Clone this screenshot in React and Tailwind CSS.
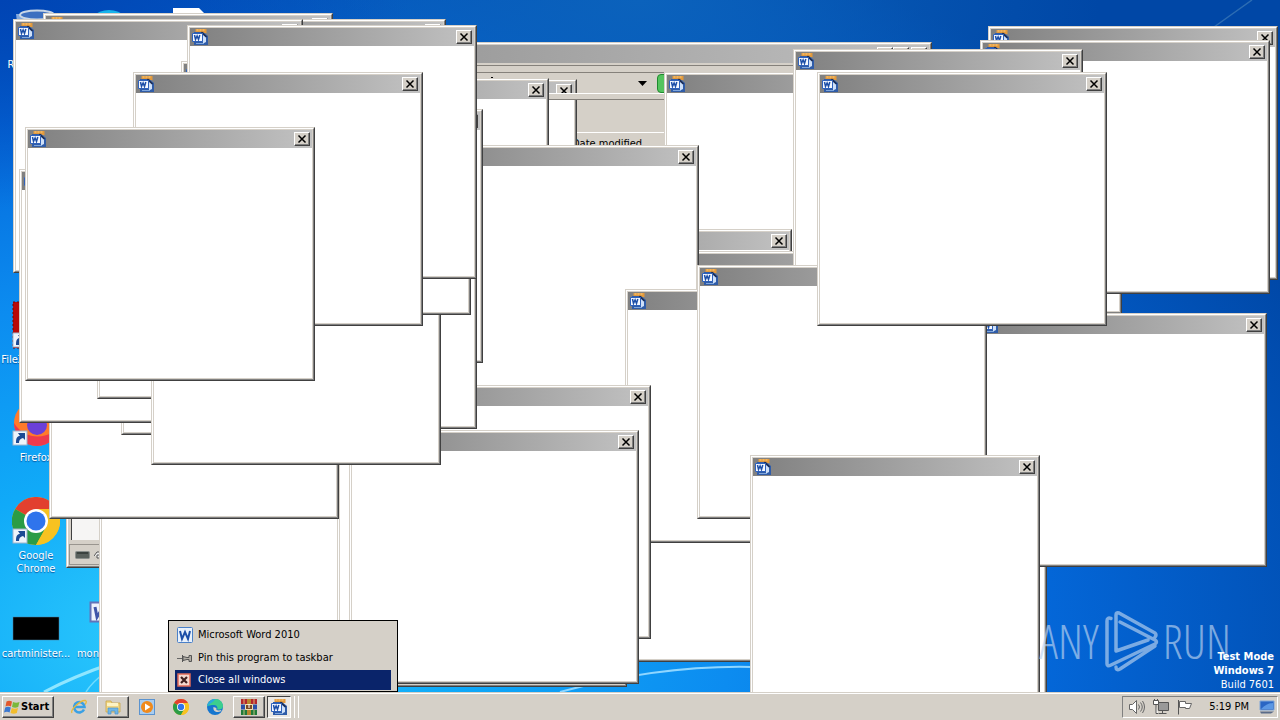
import React from "react";

const RAISED =
  "bg-[#d5d0c8] border border-t-white border-l-white border-r-[#404040] border-b-[#404040] shadow-[inset_-1px_-1px_0_#808080]";

function WordDocIcon() {
  return (
    <svg className="size-4 shrink-0" viewBox="0 0 16 16" aria-hidden="true">
      <path d="M3.500 0h11v4h-11z" fill="#e39a3c" />
      <path d="M4.500 1h9" stroke="#f8cf86" strokeDasharray="2 1" />
      <path d="M2 3h9l5 4v9H2z" fill="#2f5ca8" />
      <path d="M11 6l3 2.500v4.500l-3 1.500z" fill="#cfe0f8" />
      <path d="M9.500 3l5 5" stroke="#1b2748" strokeWidth="1.300" />
      <path d="M0.500 4.500h10v8h-10z" fill="#f4f8ff" stroke="#2f62bc" />
      <path d="M2.500 6l1 4.500 1.600-3.500 1.400 3.500L7.800 6" fill="none" stroke="#1d4fa8" strokeWidth="1.500" />
      <path d="M4 14.500h8" stroke="#7fa6dc" />
    </svg>
  );
}

function CaptionButton({ label, children }) {
  return (
    <button type="button" aria-label={label} className={"h-[14px] w-4 shrink-0 " + RAISED}>
      <svg className="block h-3 w-[14px]" viewBox="0 0 14 12" fill="none" stroke="#000" strokeWidth="1.500" aria-hidden="true">
        {children}
      </svg>
    </button>
  );
}

function CloseButton() {
  return (
    <CaptionButton label="Close">
      <path d="M3.500 2.500l7 7M10.500 2.500l-7 7" />
    </CaptionButton>
  );
}

function Frame({ x, y, w = 290, h = 254, children }) {
  return (
    <section
      className="absolute flex border border-t-[#d5d0c8] border-l-[#d5d0c8] border-r-[#404040] border-b-[#404040]"
      style={{ left: x, top: y, width: w, height: h }}
    >
      <div className="flex min-w-0 flex-1 flex-col border border-t-white border-l-white border-r-[#808080] border-b-[#808080] bg-[#d5d0c8] p-px">
        {children}
      </div>
    </section>
  );
}

function WordWindow({ x, y }) {
  return (
    <Frame x={x} y={y}>
      <header className="flex h-[18px] shrink-0 items-center justify-between bg-linear-to-r from-[#808080] to-[#c2c2c2] px-[2px]">
        <WordDocIcon />
        <CloseButton />
      </header>
      <div className="flex-1 bg-white" />
    </Frame>
  );
}

function ExplorerWindow() {
  return (
    <Frame x={66} y={42} w={866} h={526}>
      <header className="flex h-[18px] shrink-0 items-center justify-end bg-linear-to-r from-[#808080] to-[#c0c0c0] px-[2px]">
        <CaptionButton label="Minimize">
          <path d="M3 9h6" />
        </CaptionButton>
        <CaptionButton label="Maximize">
          <path d="M3 2.500h8v7H3z" />
        </CaptionButton>
        <span className="w-[2px]" />
        <CloseButton />
      </header>
      <div className="mt-[2px] h-2 shrink-0 border-b border-t border-b-[#85817b] border-t-[#85817b]" />
      <div className="relative flex h-[22px] shrink-0 items-center">
        <span className="absolute left-[422px] top-1 h-px w-[2px] bg-black" />
        <svg className="absolute left-[569px] top-2 h-[5px] w-[9px]" viewBox="0 0 9 5" aria-hidden="true">
          <path d="M0 0h9L4.500 5z" fill="#000" />
        </svg>
        <span className="absolute left-[588px] top-px h-[19px] w-5 rounded-sm border border-[#1f8a2e] bg-[#54c45e]" />
      </div>
      <div className="h-[37px] shrink-0" />
      <div className="flex h-[22px] shrink-0 items-center border-t border-white pl-[503px] text-[11px] leading-5 text-black">
        Date modified
      </div>
      <div className="ml-[2px] flex-1 border-l border-[#404040] bg-[#f6f5f4]" />
      <footer className="mt-1 flex h-[21px] shrink-0 items-center gap-1 border border-[#99958f] px-[5px]">
        <svg className="h-2 w-[15px]" viewBox="0 0 15 8" aria-hidden="true">
          <rect x="0.5" y="0.5" width="14" height="7" rx="1" fill="#59605c" stroke="#8a8f8c" />
          <path d="M2 2h11" stroke="#1f2422" />
        </svg>
        <svg className="h-2 w-[15px]" viewBox="0 0 15 8" aria-hidden="true">
          <path d="M0 5l3-4h9v3M3 4h8v3H3z" fill="#f0f0f0" stroke="#555" />
        </svg>
      </footer>
    </Frame>
  );
}

/* Stacking order, bottom to top. */
const BACK_WINDOWS = [[287, 79]];
const WINDOWS = [
  [259, 78], [832, 60], [757, 445], [988, 26], [980, 40], [977, 313],
  [664, 72], [502, 229], [650, 251], [409, 145], [500, 408], [625, 289],
  [793, 49], [697, 265], [817, 72], [99, 450], [337, 433], [361, 385],
  [349, 430], [750, 455], [49, 265], [43, 13], [156, 19], [13, 19],
  [193, 109], [187, 175], [121, 181], [19, 169], [97, 145], [151, 211],
  [181, 61], [187, 25], [133, 72], [25, 127],
];

function ShortcutArrow() {
  return (
    <g>
      <rect x="1" y="32" width="14" height="14" fill="#eef4fb" stroke="#9fb4cc" />
      <path d="M4 44c0-5 1-7 4-7l-2-3h7v7l-2-2c-3 1-4 2-4 5z" fill="#1c4a94" />
    </g>
  );
}

function ChromeArt() {
  return (
    <g>
      <circle cx="24" cy="24" r="24" fill="#f7c221" />
      <path d="M24 24L3.200 12A24 24 0 0 1 44.800 12z" fill="#e2402f" />
      <path d="M24 24L3.200 12A24 24 0 0 0 24 48l10-18z" fill="#2b9c46" />
      <path d="M24 12h20.800A24 24 0 0 1 24 48l10.400-18z" fill="#f7c221" />
      <circle cx="24" cy="24" r="12" fill="#fff" />
      <circle cx="24" cy="24" r="9.500" fill="#2f74ec" />
    </g>
  );
}

const ART = {
  recycle: (
    <g>
      <path d="M4 8l5 38h30l5-38z" fill="#b9d3ee" opacity=".7" />
      <ellipse cx="25" cy="9" rx="17" ry="4.500" fill="#3c6fc0" stroke="#c8d6e6" strokeWidth="2" />
    </g>
  ),
  app: <circle cx="24" cy="28" r="24" fill="#18b4ea" />,
  doc: <path d="M8 3h26l6 6v39H8z" fill="#fff" />,
  blank: <g />,
  filezilla: (
    <g>
      <rect x="1" y="1" width="46" height="46" fill="#b80808" stroke="#6e0505" strokeDasharray="2 2" />
      <ShortcutArrow />
    </g>
  ),
  firefox: (
    <g>
      <circle cx="25" cy="24" r="23" fill="#ff7a2a" />
      <path d="M2 24a23 23 0 0 0 46 0c-6 16-34 20-46 0z" fill="#ee3a4c" />
      <circle cx="25" cy="26" r="10" fill="#6a3fd8" />
      <ShortcutArrow />
    </g>
  ),
  chrome: (
    <g>
      <ChromeArt />
      <ShortcutArrow />
    </g>
  ),
  image: <rect x="1" y="22" width="46" height="23" fill="#000" stroke="#4b7d9c" strokeWidth=".5" />,
  word: (
    <g>
      <rect x="5.500" y="7.500" width="34" height="19" fill="#eef3fc" stroke="#6373b8" strokeWidth="2" />
      <path d="M10 12l2 10 5-8 4 8 4-10" fill="none" stroke="#3f55a8" strokeWidth="3" />
    </g>
  ),
};

const ICONS = [
  { x: 0, y: 6, art: "recycle", label: "Recycle Bin" },
  { x: 73, y: 6, art: "app", label: "" },
  { x: 153, y: 5, art: "doc", label: "" },
  { x: 0, y: 117, art: "blank", label: "Programs" },
  { x: 0, y: 301, art: "filezilla", label: "FileZilla Client" },
  { x: 0, y: 399, art: "firefox", label: "Firefox" },
  { x: 0, y: 497, art: "chrome", label: "Google Chrome" },
  { x: 0, y: 595, art: "image", label: "cartminister..." },
  { x: 73, y: 595, art: "word", label: "monthlywo..." },
];

function DesktopIcon({ x, y, art, label }) {
  return (
    <div className="absolute flex w-[72px] flex-col items-center gap-1" style={{ left: x, top: y }}>
      <svg className="size-12" viewBox="0 0 48 48" aria-hidden="true">{ART[art]}</svg>
      <span className="w-full text-center text-[11px] leading-[13px] text-white [text-shadow:0_1px_1px_#0355a0]">{label}</span>
    </div>
  );
}

function Wallpaper() {
  return (
    <div className="absolute inset-0 bg-[radial-gradient(ellipse_98%_112%_at_14%_92%,#2fcdfd_0%,#10aaf8_22%,#0c8cf0_44%,#0468da_68%,#0047a6_100%)]">
      <div className="absolute inset-0 bg-[radial-gradient(ellipse_36%_34%_at_50%_0%,#0b62bc_0%,transparent_100%)]" />
      <div className="absolute inset-0 bg-[radial-gradient(ellipse_32%_30%_at_0%_0%,#0044b4_0%,transparent_100%)]" />
      <svg className="absolute inset-0 size-full" viewBox="0 0 1280 692" preserveAspectRatio="none" aria-hidden="true">
        <path d="M44 692Q75 676 110 664" fill="none" stroke="#8fe6ff" strokeWidth="3" />
        <path d="M86 692Q92 682 106 672" fill="none" stroke="#6fdcff" strokeWidth="1.500" />
        <path d="M560 692Q660 665 752 667" fill="none" stroke="#8fd6ff" strokeWidth="2" />
        <path d="M1214 27L1252 0" stroke="#4a86bd" strokeWidth="1.500" opacity=".6" />
      </svg>
    </div>
  );
}

function Watermark() {
  return (
    <div className="pointer-events-none absolute bottom-5 right-[49px] flex items-center gap-1 text-[47px] font-light leading-none text-[#bcd4f0] opacity-65 [font-family:'Open_Sans_Condensed_Light','Open_Sans_Condensed','Liberation_Sans_Narrow','Liberation_Sans',sans-serif]">
      <span>ANY</span>
      <svg className="h-[62px] w-14" viewBox="0 0 56 62" aria-hidden="true">
        <path
          d="M8 8.500Q4 7 4 11v43q0 3 4 1l44-21q3-2 0-4L17 12M13 41V5q0-3 3-2l36 20q2 2 0 4M13 41l32-11M13 57q0 4 4 2l35-23"
          fill="none"
          stroke="currentColor"
          strokeWidth="3.500"
          strokeLinejoin="round"
          strokeLinecap="round"
        />
      </svg>
      <span>RUN</span>
    </div>
  );
}

const MENU_ROW = "flex w-full items-center gap-[5px] px-[2px] text-left text-[11px]";

function JumpMenu() {
  return (
    <div role="menu" className="absolute bottom-0 left-[168px] flex w-[230px] flex-col gap-px border border-black bg-[#d5d0c8] px-[6px] pb-px pt-[3px] text-black">
      <button type="button" role="menuitem" className={"h-[22px] " + MENU_ROW}>
        <svg className="size-4" viewBox="0 0 16 16" aria-hidden="true">
          <rect x="0.500" y="0.500" width="15" height="15" rx="1" fill="#e8f1fc" stroke="#4a80c8" />
          <path d="M3 4l2 8 3-7 3 7 2-8" fill="none" stroke="#1d4fa8" strokeWidth="2" />
        </svg>
        Microsoft Word 2010
      </button>
      <button type="button" role="menuitem" className={"h-[22px] " + MENU_ROW}>
        <svg className="size-4" viewBox="0 0 16 16" aria-hidden="true">
          <path d="M0 8.500h5" stroke="#666" />
          <path d="M5.500 5v7M6 6.500l4 1h2v-2h2.500v6H12v-2h-2l-4 1z" fill="#b0aca4" stroke="#555" />
        </svg>
        Pin this program to taskbar
      </button>
      <button type="button" role="menuitem" className={"h-5 bg-[#0a246a] text-white " + MENU_ROW}>
        <svg className="size-4" viewBox="0 0 16 16" aria-hidden="true">
          <rect x="1" y="2" width="12" height="12" fill="#f6d8d0" stroke="#e06a58" strokeWidth="1.500" />
          <path d="M4 5l6 6M10 5l-6 6" stroke="#402020" strokeWidth="2.200" />
        </svg>
        Close all windows
      </button>
    </div>
  );
}

function IeIcon() {
  return (
    <svg className="size-4" viewBox="0 0 16 16" aria-hidden="true">
      <path d="M13 10.500A5.200 5.200 0 1 1 13.500 8H4.500" fill="none" stroke="#3aa0e4" strokeWidth="2.600" />
      <path d="M1 14C-1 11 9 1 14.500 1.500c1.500.5.500 3-.5 4" fill="none" stroke="#e8b93a" strokeWidth="1.300" />
    </svg>
  );
}

function FolderIcon() {
  return (
    <svg className="size-4" viewBox="0 0 16 16" aria-hidden="true">
      <path d="M1 2h5l1 2h8v9H1z" fill="#f0d684" stroke="#c9a544" strokeWidth=".8" />
      <path d="M2 4h11v3H2z" fill="#fdf3c4" />
      <path d="M3 15V9h10v6h-3v-3H6v3z" fill="#6fb6e6" stroke="#4a93cc" strokeWidth=".7" />
    </svg>
  );
}

function MediaIcon() {
  return (
    <svg className="size-4" viewBox="0 0 16 16" aria-hidden="true">
      <rect x="0.500" y="0.500" width="15" height="15" fill="#a9cdf0" stroke="#5b93cf" />
      <circle cx="8" cy="8" r="6" fill="#f08a1c" />
      <path d="M6 4.500l5.500 3.500L6 11.500z" fill="#fff" />
    </svg>
  );
}

function ChromeIcon() {
  return (
    <svg className="size-4" viewBox="0 0 48 48" aria-hidden="true">
      <ChromeArt />
    </svg>
  );
}

function EdgeIcon() {
  return (
    <svg className="size-4" viewBox="0 0 16 16" aria-hidden="true">
      <circle cx="8" cy="8" r="8" fill="#1676cf" />
      <path d="M0 7.500C1 2 5 0 8.500 0 13 0 16 3.500 16 7c0 3-3 4-6 3.500 1-1 .5-4.500-3-4.500C4 6 1 6.500 0 7.500z" fill="#3ccf8e" />
      <path d="M0 7.500C1 2 5 0 8.500 0c-2 3-5 4-8.500 7.500z" fill="#2aa9e0" />
      <path d="M6.500 8c-1 4 3 6 7 4.500l1-1.500c-4 1-6 0-5-2z" fill="#d5d0c8" />
    </svg>
  );
}

function RarIcon() {
  return (
    <svg className="size-4" viewBox="0 0 16 16" aria-hidden="true">
      <path d="M0 0h16v5H0z" fill="#b3262e" />
      <path d="M0 5.500h16v5H0z" fill="#2a4fa8" />
      <path d="M0 11h16v5H0z" fill="#1f7a3a" />
      <path d="M6 0h4v16H6z" fill="#b8862e" />
      <path d="M4.500 5.500h7v5h-7z" fill="#7a4a2a" stroke="#f4e2b0" />
      <path d="M8 5v4" stroke="#fff" />
      <path d="M3 0v5M13 0v5M3 11v5M13 11v5" stroke="#e8d48a" strokeWidth=".8" />
    </svg>
  );
}

const TASKS = [
  { name: "Internet Explorer", Icon: IeIcon, open: false },
  { name: "Windows Explorer", Icon: FolderIcon, open: true },
  { name: "Media Player", Icon: MediaIcon, open: false },
  { name: "Google Chrome", Icon: ChromeIcon, open: false },
  { name: "Microsoft Edge", Icon: EdgeIcon, open: false },
  { name: "WinRAR", Icon: RarIcon, open: true },
];

function Taskbar() {
  return (
    <footer className="flex h-7 shrink-0 items-center justify-between border-t border-[#d5d0c8] bg-[#d5d0c8] px-[2px] shadow-[inset_0_1px_0_#fff]">
      <nav className="flex items-center gap-[2px]">
        <button type="button" className={"mr-[7px] flex h-[22px] w-[52px] items-center gap-px pl-px text-[11px] font-bold text-black " + RAISED}>
          <svg className="size-4 shrink-0" viewBox="0 0 16 16" aria-hidden="true">
            <path d="M2.500 2.500Q5 1 8 2.500L7 7.500Q4 6 1.500 7.500z" fill="#e2572b" />
            <path d="M9 3q3 1.500 6.500 0l-1.300 5q-3 1.500-6.200 0z" fill="#7ab83a" />
            <path d="M1.200 8.500Q4 7 6.800 8.500l-1.200 5Q3 12 0 13.500z" fill="#3b78d0" />
            <path d="M7.800 9q3 1.500 6.200 0l-1.200 5q-3 1.500-6.300 0z" fill="#f2bd2c" />
          </svg>
          <span className="pt-[2px]">Start</span>
        </button>
        {TASKS.map(({ name, Icon, open }) => (
          <button
            key={name}
            type="button"
            aria-label={name}
            className={"flex h-[22px] w-8 items-center justify-center " + (open ? RAISED : "")}
          >
            <Icon />
          </button>
        ))}
        <div className="flex h-[22px] items-stretch gap-[2px]">
          <button
            type="button"
            aria-label="Microsoft Word"
            className="flex w-6 items-center justify-center border border-b-white border-l-[#404040] border-r-white border-t-[#404040] bg-[#ebe8e4]"
          >
            <WordDocIcon />
          </button>
          <span className="w-[2px] border-r border-white" />
          <span className="w-[2px] border-r border-white" />
        </div>
      </nav>
      <div className="flex h-[22px] items-center border border-b-white border-l-[#808080] border-r-white border-t-[#808080] pl-[6px] pr-[2px]">
        <div className="flex gap-2">
          <svg className="size-4" viewBox="0 0 16 16" fill="none" stroke="#666" aria-hidden="true">
            <path d="M0.500 5.500h3l4-4v13l-4-4h-3z" fill="#fff" />
            <path d="M9.500 5.500q2 2.500 0 5M11.500 3.500q3.500 4.500 0 9M13.500 2q4 6 0 12" />
          </svg>
          <svg className="size-4" viewBox="0 0 16 16" fill="none" stroke="#555" aria-hidden="true">
            <path d="M5.500 3.500h10v8h-10z" fill="#999" />
            <path d="M5.500 14.500h8M9.500 12v2" />
            <path d="M0.500 1.500h5v4h-5zM1.500 0v2M4.500 0v2M3 6v8.500h2" fill="#fff" />
          </svg>
          <svg className="size-4" viewBox="0 0 16 16" aria-hidden="true">
            <path d="M1.500 1v14.500" stroke="#555" />
            <path d="M2.500 2.500h6v2h6l-2 5h-4v-1h-6z" fill="#fff" stroke="#666" />
          </svg>
        </div>
        <span className="pl-4 pr-[10px] pt-[2px] text-[11px] text-black">5:19 PM</span>
        <svg className="size-4" viewBox="0 0 16 16" aria-hidden="true">
          <path d="M1 2h14v9H1z" fill="#2a66c4" stroke="#7ea6d8" />
          <path d="M2 10Q8 4 14 4v6z" fill="#5c98e4" />
          <path d="M1 12.500h14l-3 2H2z" fill="#5a6b88" />
        </svg>
      </div>
    </footer>
  );
}

export default function App() {
  return (
    <div className="flex h-screen flex-col overflow-hidden [font-family:'DejaVu_Sans_Condensed','DejaVu_Sans',sans-serif]">
      <main className="relative flex-1 overflow-hidden">
        <Wallpaper />
        {ICONS.map((icon) => (
          <DesktopIcon key={icon.y + "-" + icon.x} {...icon} />
        ))}
        <ExplorerWindow />
        {BACK_WINDOWS.map(([x, y]) => (
          <WordWindow key={x + "-" + y} x={x} y={y} />
        ))}
        <div className="absolute left-[540px] top-[93px] h-[7px] w-[130px] border-b border-t border-b-[#85817b] border-t-white bg-[#d5d0c8]" />
        {WINDOWS.map(([x, y]) => (
          <WordWindow key={x + "-" + y} x={x} y={y} />
        ))}
        <Watermark />
        <div className="absolute bottom-0 right-[6px] text-right text-[11px] leading-[14px] text-white">
          <p className="font-bold">Test Mode</p>
          <p className="font-bold">Windows 7</p>
          <p>Build 7601</p>
        </div>
        <JumpMenu />
      </main>
      <Taskbar />
    </div>
  );
}
